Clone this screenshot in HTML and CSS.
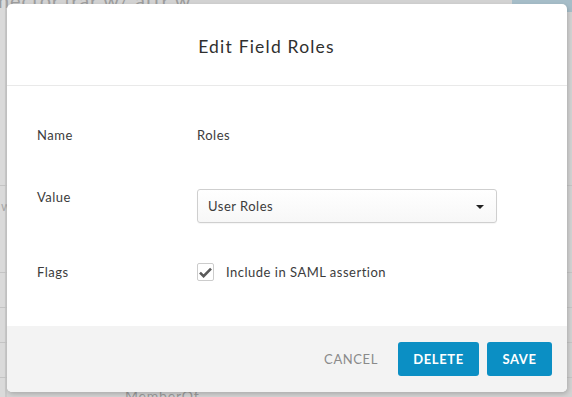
FILE: index.html
```html
<!DOCTYPE html>
<html>
<head>
<meta charset="utf-8">
<link rel="stylesheet" href="styles.css">
</head>
<body>
<div class="page">
  <div class="page-top">
    <span class="page-title">Connector (rar w/ attr w...</span>
    <span class="page-accent"></span>
  </div>
  <div class="page-rows">
    <div class="page-row page-row-tall"><span class="page-cell">w</span></div>
    <div class="page-row"></div>
    <div class="page-row"></div>
    <div class="page-row"></div>
    <div class="page-row page-last"><span class="page-member">MemberOf</span></div>
  </div>
</div>

<div class="modal">
  <div class="modal-header">
    <h1 class="modal-title">Edit Field Roles</h1>
  </div>
  <div class="modal-body">
    <div class="field field-name">
      <div class="field-label">Name</div>
      <div class="field-value">Roles</div>
    </div>
    <div class="field field-select">
      <div class="field-label">Value</div>
      <div class="select">
        <span class="select-text">User Roles</span>
        <span class="caret"></span>
      </div>
    </div>
    <div class="field field-flags">
      <div class="field-label">Flags</div>
      <label class="check">
        <span class="check-box">
          <svg width="13" height="11" viewBox="0 0 13 11"><path d="M1 5.6 L4.6 9.2 L12 1.6" fill="none" stroke="#5a5a5a" stroke-width="2.6" stroke-linecap="butt" stroke-linejoin="miter"/></svg>
        </span>
        <span class="check-text">Include in SAML assertion</span>
      </label>
    </div>
  </div>
  <div class="modal-footer">
    <button class="btn btn-link">CANCEL</button>
    <button class="btn btn-primary">DELETE</button>
    <button class="btn btn-primary">SAVE</button>
  </div>
</div>
</body>
</html>
```

FILE: styles.css
```css
html, body {
  margin: 0;
  padding: 0;
}
body {
  width: 572px;
  height: 397px;
  overflow: hidden;
  position: relative;
  background: #d2d2d2;
  font-family: "Lato", "Open Sans", sans-serif;
}

/* dimmed page behind the dialog */
.page {
  height: 397px;
  overflow: hidden;
  display: flex;
  flex-direction: column;
  background: linear-gradient(to right, #dadada 0, #dadada 5px, #c9c9c9 5px, #c9c9c9 7px, #d2d2d2 7px);
}
.page-top {
  height: 12px;
  flex: none;
  display: flex;
  justify-content: space-between;
  overflow: hidden;
}
.page-title {
  font-size: 20px;
  line-height: 20px;
  color: #9d9d9d;
  margin-top: -10px;
  margin-left: -40px;
  letter-spacing: 0.8px;
}
.page-accent {
  width: 60px;
  height: 12px;
  background: #a6bdc8;
}
.page-rows {
  flex: 1;
  display: flex;
  flex-direction: column;
  padding-top: 173px;
}
.page-row {
  flex: none;
  height: 34px;
  border-top: 1px solid #c4c4c4;
  position: relative;
}
.page-row-tall {
  height: 86px;
}
.page-cell {
  color: #a8a8a8;
  font-size: 13px;
  display: block;
  padding-top: 12px;
  margin-left: 1px;
}
.page-last {
  height: 18px;
}
.page-member {
  position: absolute;
  left: 125px;
  top: 9px;
  color: #9a9a9a;
  font-size: 14px;
  letter-spacing: 0.8px;
}

/* dialog */
.modal {
  position: absolute;
  left: 7px;
  top: 4px;
  width: 560px;
  height: 388px;
  background: #fff;
  border-radius: 5px;
  box-shadow: 1px 2px 4px rgba(0, 0, 0, 0.18);
  display: flex;
  flex-direction: column;
  overflow: hidden;
}
.modal-header {
  height: 81px;
  border-bottom: 1px solid #e9e9e9;
  display: flex;
  align-items: center;
  justify-content: center;
  padding-right: 41px;
}
.modal-title {
  margin: 0;
  padding-top: 4px;
  font-size: 17.5px;
  font-weight: 400;
  color: #2f2f2f;
  letter-spacing: 1.2px;
}
.modal-body {
  flex: 1;
  padding: 41px 0 0 30px;
  display: flex;
  flex-direction: column;
}
.field {
  display: flex;
  align-items: flex-start;
  font-size: 13px;
  color: #3c3c3c;
  letter-spacing: 0.5px;
}
.field-label {
  width: 160px;
  line-height: 16px;
}
.field-value {
  line-height: 16px;
}
.field-select {
  margin-top: 46px;
}
.select {
  box-sizing: border-box;
  width: 300px;
  height: 34px;
  border: 1px solid #cfcfcf;
  border-radius: 3px;
  background: linear-gradient(#ffffff, #f7f7f7);
  box-shadow: 0 1px 1px rgba(0, 0, 0, 0.04);
  display: flex;
  align-items: center;
  justify-content: space-between;
  padding: 0 12px 0 10px;
}
.select-text {
  color: #3c3c3c;
}
.caret {
  width: 0;
  height: 0;
  border-left: 4px solid transparent;
  border-right: 4px solid transparent;
  border-top: 4px solid #222;
  margin-top: 1px;
}
.field-flags {
  margin-top: 40px;
  align-items: center;
}
.check {
  display: flex;
  align-items: center;
}
.check-box {
  box-sizing: border-box;
  width: 17px;
  height: 18px;
  border: 1px solid #cccccc;
  border-radius: 2px;
  background: #fff;
  display: flex;
  align-items: center;
  justify-content: center;
  margin-right: 12px;
}
.check-text {
  color: #3c3c3c;
}

.modal-footer {
  height: 66px;
  background: #f3f3f3;
  display: flex;
  align-items: center;
  justify-content: flex-end;
  padding-right: 15px;
}
.btn {
  font-family: "Lato", "Open Sans", sans-serif;
  font-size: 13px;
  height: 34px;
  border: 0;
  border-radius: 3px;
  padding: 0;
  cursor: pointer;
}
.btn-link {
  background: transparent;
  color: #8a8a8a;
  letter-spacing: 0.6px;
  margin-right: 20px;
}
.btn-primary {
  background: #0b8fc4;
  color: #fff;
  font-weight: 700;
  letter-spacing: 0.6px;
}
.btn-primary:nth-child(2) {
  width: 81px;
  margin-right: 8px;
}
.btn-primary:nth-child(3) {
  width: 65px;
}
```
